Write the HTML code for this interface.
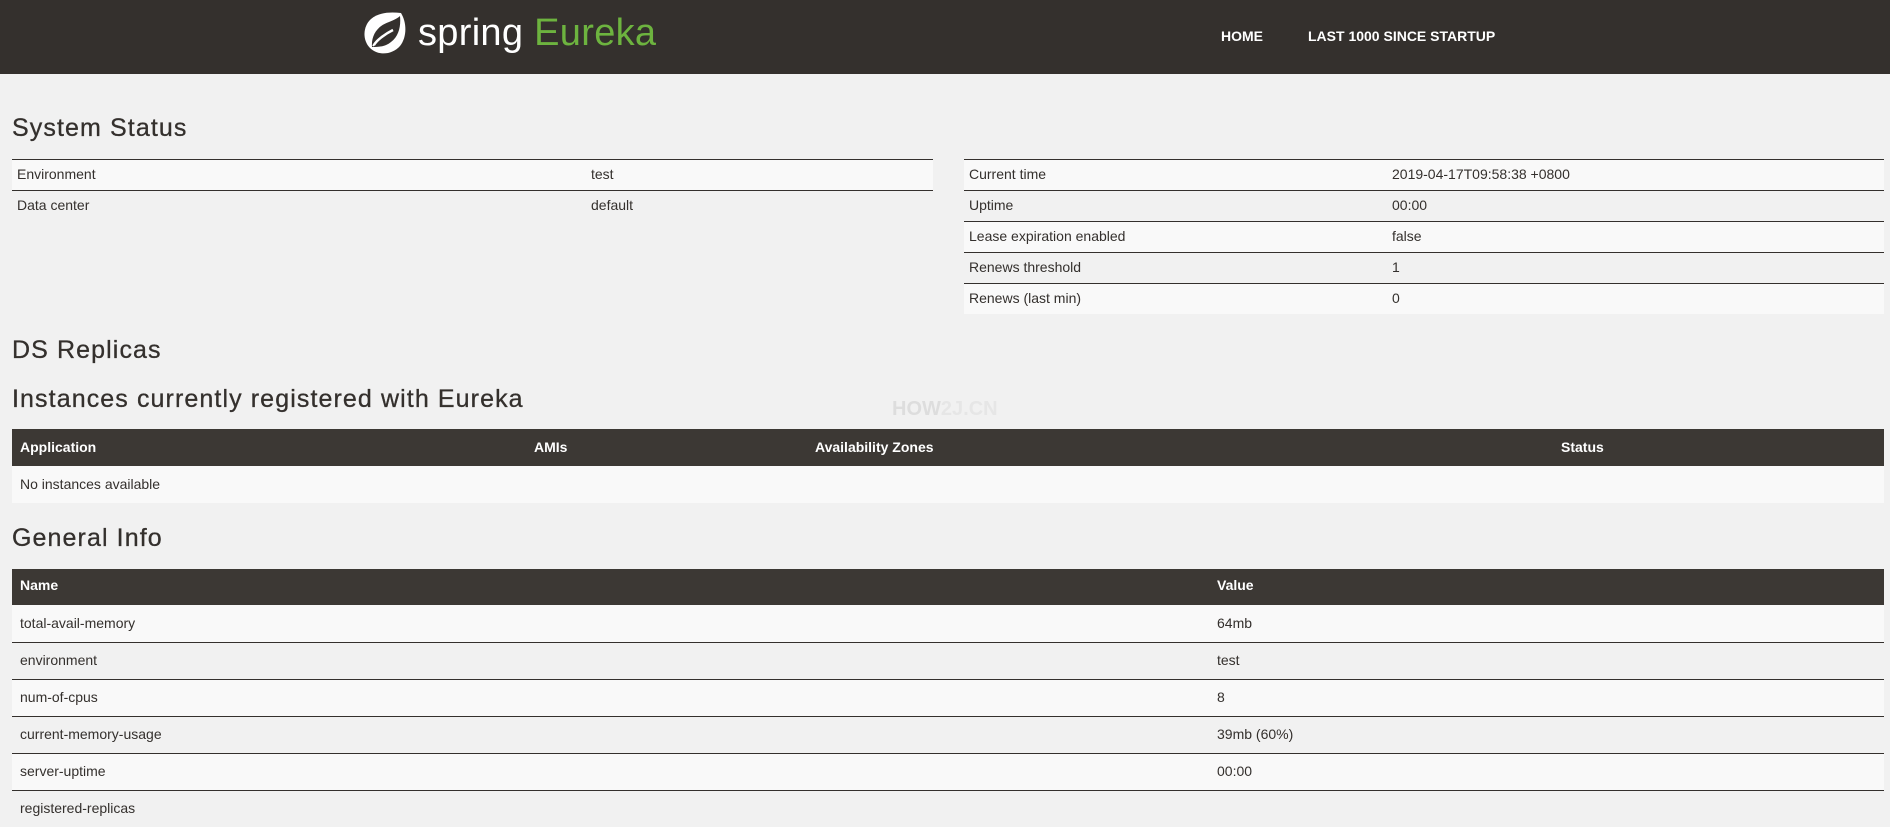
<!DOCTYPE html>
<html><head><meta charset="utf-8"><style>
*{margin:0;padding:0;box-sizing:border-box}
body{width:1890px;height:818px;overflow:hidden;background:#f1f1f1;font-family:"Liberation Sans",sans-serif;color:#34302d;position:relative}
.hdr{position:absolute;left:0;top:0;width:1890px;height:74px;background:#34302d}
.abs{position:absolute;white-space:nowrap}
h2{position:absolute;left:12px;font-size:25px;font-weight:normal;letter-spacing:1.1px;color:#34302d;line-height:28px;-webkit-text-stroke:0.3px #34302d}
.t{position:absolute;font-size:14px;line-height:31px}
.row{position:absolute;border-top:1px solid #34302d}
.th{position:absolute;background:#3c3834;color:#fff;font-weight:bold;font-size:14px}
</style></head><body>
<div class="hdr"></div>
<svg class="abs" style="left:363px;top:10px" width="44" height="46" viewBox="0 0 44 46">
<path d="M38 3 C44 13 44 27 37 36 C29 45 15 46 7 38 C-1 30 0 16 8 9 C16 2 28 2 38 3 Z" fill="#fff"/>
<path d="M9 37 C8 26 14 16 26 12 C31 10 35 8 37 6 C38 16 36 26 28 32 C22 37 15 37 9 37 Z" fill="#34302d"/>
<path d="M11 35 C14 30 22 24 30 20" stroke="#fff" stroke-width="2.5" fill="none"/>
<path d="M10 36 C12 33 14 31 15 30" stroke="#fff" stroke-width="2" fill="none"/>
</svg>
<div class="abs" style="left:418px;top:10px;font-size:38px;line-height:46px;color:#fff;letter-spacing:0.3px">spring <span style="color:#6db33f">Eureka</span></div>
<div class="abs" style="left:1221px;top:28px;font-size:14px;font-weight:bold;color:#fff">HOME</div>
<div class="abs" style="left:1308px;top:28px;font-size:14px;font-weight:bold;color:#fff">LAST 1000 SINCE STARTUP</div>

<h2 style="top:114px">System Status</h2>
<div class="row" style="left:12px;top:159px;width:921px;height:31px;background:#f9f9f9"></div>
<div class="row" style="left:12px;top:190px;width:921px;height:31px"></div>
<div class="t" style="left:17px;top:159px">Environment</div><div class="t" style="left:591px;top:159px">test</div>
<div class="t" style="left:17px;top:190px">Data center</div><div class="t" style="left:591px;top:190px">default</div>

<div class="row" style="left:964px;top:159px;width:920px;height:31px;background:#f9f9f9"></div>
<div class="row" style="left:964px;top:190px;width:920px;height:31px;background:#f1f1f1"></div>
<div class="row" style="left:964px;top:221px;width:920px;height:31px;background:#f9f9f9"></div>
<div class="row" style="left:964px;top:252px;width:920px;height:31px;background:#f1f1f1"></div>
<div class="row" style="left:964px;top:283px;width:920px;height:31px;background:#f9f9f9"></div>
<div class="t" style="left:969px;top:159px">Current time</div><div class="t" style="left:1392px;top:159px">2019-04-17T09:58:38 +0800</div>
<div class="t" style="left:969px;top:190px">Uptime</div><div class="t" style="left:1392px;top:190px">00:00</div>
<div class="t" style="left:969px;top:221px">Lease expiration enabled</div><div class="t" style="left:1392px;top:221px">false</div>
<div class="t" style="left:969px;top:252px">Renews threshold</div><div class="t" style="left:1392px;top:252px">1</div>
<div class="t" style="left:969px;top:283px">Renews (last min)</div><div class="t" style="left:1392px;top:283px">0</div>

<h2 style="top:336px">DS Replicas</h2>
<h2 style="top:385px">Instances currently registered with Eureka</h2>
<div class="abs" style="left:892px;top:398px;font-size:20px;font-weight:bold;color:#ddd">HOW<span style="color:#e6e6e6">2J.CN</span></div>
<div class="th" style="left:12px;top:429px;width:1872px;height:37px"></div>
<div class="t" style="left:20px;top:432px;color:#fff;font-weight:bold">Application</div>
<div class="t" style="left:534px;top:432px;color:#fff;font-weight:bold">AMIs</div>
<div class="t" style="left:815px;top:432px;color:#fff;font-weight:bold">Availability Zones</div>
<div class="t" style="left:1561px;top:432px;color:#fff;font-weight:bold">Status</div>
<div class="abs" style="left:12px;top:466px;width:1872px;height:37px;background:#f9f9f9"></div>
<div class="t" style="left:20px;top:469px">No instances available</div>

<h2 style="top:524px">General Info</h2>
<div class="th" style="left:12px;top:569px;width:1872px;height:36px"></div>
<div class="t" style="left:20px;top:570px;color:#fff;font-weight:bold">Name</div>
<div class="t" style="left:1217px;top:570px;color:#fff;font-weight:bold">Value</div>
<div class="abs" style="left:12px;top:605px;width:1872px;height:37px;background:#f9f9f9"></div>
<div class="row" style="left:12px;top:642px;width:1872px;height:37px;background:#f1f1f1"></div>
<div class="row" style="left:12px;top:679px;width:1872px;height:37px;background:#f9f9f9"></div>
<div class="row" style="left:12px;top:716px;width:1872px;height:37px;background:#f1f1f1"></div>
<div class="row" style="left:12px;top:753px;width:1872px;height:37px;background:#f9f9f9"></div>
<div class="row" style="left:12px;top:790px;width:1872px;height:37px;background:#f1f1f1"></div>
<div class="t" style="left:20px;top:608px">total-avail-memory</div><div class="t" style="left:1217px;top:608px">64mb</div>
<div class="t" style="left:20px;top:645px">environment</div><div class="t" style="left:1217px;top:645px">test</div>
<div class="t" style="left:20px;top:682px">num-of-cpus</div><div class="t" style="left:1217px;top:682px">8</div>
<div class="t" style="left:20px;top:719px">current-memory-usage</div><div class="t" style="left:1217px;top:719px">39mb (60%)</div>
<div class="t" style="left:20px;top:756px">server-uptime</div><div class="t" style="left:1217px;top:756px">00:00</div>
<div class="t" style="left:20px;top:793px">registered-replicas</div>
</body></html>
